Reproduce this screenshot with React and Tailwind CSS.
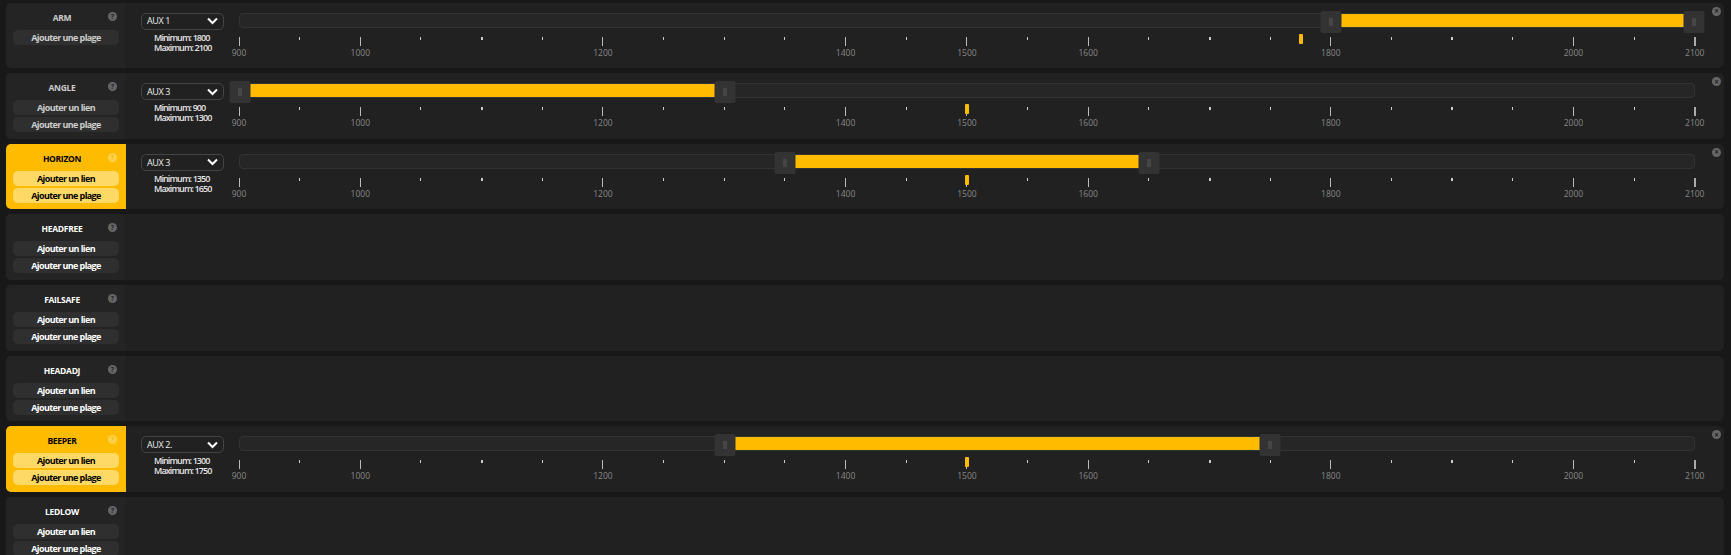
import React from "react";

const TICKS = [
  900, null, 1000, null, null, null, 1200, null, null, null, 1400, null, 1500,
  null, 1600, null, null, null, 1800, null, null, null, 2000, null, 2100,
];
// these small ticks come out a bit fatter in the screenshot
const FAT = [4, 16, 20];

const MODES = [
  { name: "ARM", dim: true, link: false, aux: "AUX 1", min: 1800, max: 2100, mark: 1775 },
  { name: "ANGLE", dim: true, link: true, aux: "AUX 3", min: 900, max: 1300, mark: 1500 },
  { name: "HORIZON", on: true, link: true, aux: "AUX 3", min: 1350, max: 1650, mark: 1500 },
  { name: "HEADFREE", link: true },
  { name: "FAILSAFE", link: true },
  { name: "HEADADJ", link: true },
  { name: "BEEPER", on: true, link: true, aux: "AUX 2.", min: 1300, max: 1750, mark: 1500 },
  { name: "LEDLOW", link: true },
];

const pct = (v) => ((v - 900) / 1200) * 100;

function Handle({ value }) {
  return (
    <div
      className="absolute top-[-3px] h-[22px] w-[21px] -translate-x-1/2 rounded-[2px] bg-[#333333] flex items-center justify-center gap-[1px]"
      style={{ left: `${pct(value)}%` }}
    >
      <span className="h-[8px] w-px bg-[#5a5a5a]" />
      <span className="h-[8px] w-px bg-[#5a5a5a]" />
    </div>
  );
}

function Pips() {
  return (
    <div className="flex justify-between h-[24px] mt-[9px]">
      {TICKS.map((label, i) => (
        <div key={i} className="w-0 flex flex-col items-center">
          {label ? (
            <>
              <span className={`h-[9px] shrink-0 ${label === 2100 ? "w-[2px] bg-[#aaaaaa]" : "w-px bg-[#bbbbbb]"}`} />
              <span className="mt-[2px] text-[8.5px] leading-[10px] text-[#888888]">{label}</span>
            </>
          ) : (
            <span className={`h-[3px] shrink-0 bg-[#cccccc] ${FAT.includes(i) ? "w-[2px]" : "w-px"}`} />
          )}
        </div>
      ))}
    </div>
  );
}

function Range({ mode }) {
  return (
    <div className="flex-1 relative flex pt-[10px] pl-[15px]">
      <div className="w-[98px] shrink-0">
        <div className="h-[17px] w-[83px] rounded-[5px] border border-[#444444] flex items-center justify-between pl-[5px] pr-[5px] text-[9px] tracking-[-0.4px] text-[#eeeeee]">
          <span>{mode.aux}</span>
          <svg width="11" height="8" viewBox="0 0 11 8" fill="none" stroke="#ffffff" strokeWidth="2">
            <path d="M1 1.5 L5.5 6 L10 1.5" />
          </svg>
        </div>
        <div className="ml-[13px] mt-[3px] text-[9px] font-semibold leading-[10px] tracking-[-0.9px] text-[#e4e4e4] whitespace-nowrap">
          <div>Minimum: {mode.min}</div>
          <div>Maximum: {mode.max}</div>
        </div>
      </div>
      <div className="w-[1456px] relative">
        <div className="relative h-[15px] rounded-[4px] border border-[#333333] bg-[#262626]">
          <div
            className="absolute top-0 bottom-0 bg-[#ffbb00]"
            style={{ left: `${pct(mode.min)}%`, width: `${pct(mode.max) - pct(mode.min)}%` }}
          />
          <Handle value={mode.min} />
          <Handle value={mode.max} />
        </div>
        <Pips />
        <div
          className="absolute top-[21px] h-[10px] w-[4px] -translate-x-1/2 rounded-[1px] bg-[#ffbb00]"
          style={{ left: `${pct(mode.mark)}%` }}
        />
      </div>
      <div className="absolute top-[4px] right-[3px] flex h-[9px] w-[9px] items-center justify-center rounded-full bg-[#666666] text-[8px] font-bold leading-none text-[#222222]">
        ×
      </div>
    </div>
  );
}

function Row({ mode }) {
  const btn = mode.on
    ? "bg-[#ffd966] text-black"
    : mode.dim
      ? "bg-[#2f2f2f] text-[#cccccc]"
      : "bg-[#2f2f2f] text-white";
  return (
    <div className="flex h-[65.6px] shrink-0 rounded-[5px] bg-[#212121] overflow-hidden">
      <div className={`relative w-[120px] shrink-0 px-[7px] pt-[5px] ${mode.on ? "bg-[#ffbb00]" : "bg-[#242424]"}`}>
        <div
          className={`pr-[8px] text-center text-[8.5px] font-bold leading-[20px] tracking-[-0.3px] ${mode.on ? "text-black" : mode.dim ? "text-[#cccccc]" : "text-white"}`}
        >
          {mode.name}
        </div>
        <div
          className={`absolute top-[9px] right-[9px] flex h-[9px] w-[9px] items-center justify-center rounded-full text-[7px] font-bold leading-none ${mode.on ? "bg-[#ffd24d] text-[#ffbb00]" : "bg-[#666666] text-[#242424]"}`}
        >
          ?
        </div>
        <div className="flex flex-col gap-[2px] mt-[2px]">
          {mode.link && (
            <div className={`h-[15px] rounded-[5px] text-center text-[9px] font-bold leading-[15px] tracking-[-0.6px] ${btn}`}>
              Ajouter un lien
            </div>
          )}
          <div className={`h-[15px] rounded-[5px] text-center text-[9px] font-bold leading-[15px] tracking-[-0.6px] ${btn}`}>
            Ajouter une plage
          </div>
        </div>
      </div>
      {mode.aux && <Range mode={mode} />}
    </div>
  );
}

export default function App() {
  return (
    <div className="h-[555px] overflow-hidden bg-[#181818] pl-[6px] pr-[7px] pt-[2.6px] flex flex-col gap-[5px] font-['Open_Sans',sans-serif]">
      {MODES.map((m) => (
        <Row key={m.name} mode={m} />
      ))}
    </div>
  );
}
